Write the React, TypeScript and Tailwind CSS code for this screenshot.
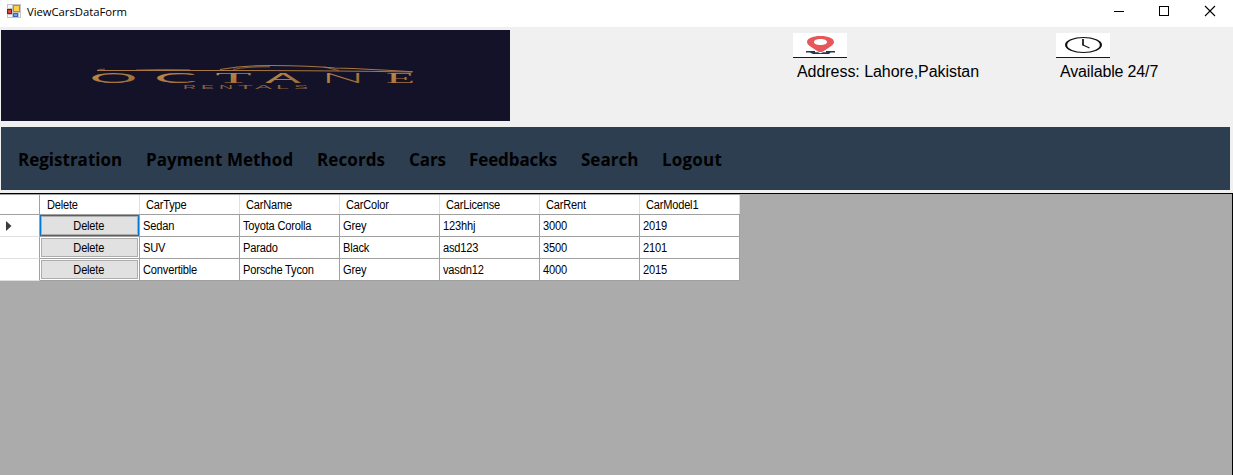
import React from "react";

const navItems = [
  { label: "Registration", style: "w-[128px]" },
  { label: "Payment Method", style: "w-[171px] tracking-[0.07px]" },
  { label: "Records", style: "w-[92px] tracking-[0.1px]" },
  { label: "Cars", style: "w-[60px] tracking-[-0.1px]" },
  { label: "Feedbacks", style: "w-[112px] tracking-[-0.1px]" },
  { label: "Search", style: "w-[81px]" },
  { label: "Logout", style: "w-[80px] tracking-[0.2px]" },
];

const columns = ["Delete", "CarType", "CarName", "CarColor", "CarLicense", "CarRent", "CarModel1"];

const rows = [
  ["Sedan", "Toyota Corolla", "Grey", "123hhj", "3000", "2019"],
  ["SUV", "Parado", "Black", "asd123", "3500", "2101"],
  ["Convertible", "Porsche Tycon", "Grey", "vasdn12", "4000", "2015"],
];

function FormIcon() {
  return (
    <svg width="14" height="14" viewBox="0 0 14 14" className="block" shapeRendering="crispEdges">
      <rect width="14" height="14" fill="#c4c4c4" />
      <path d="M1 1h4v3H1zM1 11h4v2H1zM12 9h1v4h-1z" fill="#f4f4f4" />
      <rect x="0" y="5" width="5" height="5" fill="#8c1414" />
      <rect x="1" y="6" width="3" height="3" fill="#d84343" />
      <rect x="6" y="1" width="7" height="7" fill="#c98a0c" />
      <rect x="7" y="2" width="5" height="5" fill="#fbd04c" />
      <rect x="6" y="9" width="5" height="4" fill="#2f66cc" />
      <rect x="7" y="10" width="3" height="2" fill="#6fa0f2" />
    </svg>
  );
}

function TitleBar() {
  return (
    <header className="flex h-[27px] shrink-0 items-start bg-white">
      <div className="pl-[7px] pt-[4px]"><FormIcon /></div>
      <h1 className="ml-[6px] mt-[4px] whitespace-nowrap font-['Open_Sans',sans-serif] text-[11.3px] leading-[16px] tracking-[-0.04px] text-black">
        ViewCarsDataForm
      </h1>
      <svg className="ml-auto mr-[17px] mt-[5px]" width="102" height="12" viewBox="0 0 102 12" fill="none" stroke="#000">
        <path d="M0 6.5h10" shapeRendering="crispEdges" />
        <rect x="45.5" y="1.5" width="9" height="9" shapeRendering="crispEdges" />
        <path d="M91 1l10 10M101 1L91 11" strokeWidth="1.1" />
      </svg>
    </header>
  );
}

const logoLetters = [
  { char: "O", x: 89.5, width: 48, family: "Lato", weight: 400 },
  { char: "C", x: 154, width: 43, family: "Lato", weight: 400 },
  { char: "T", x: 215.5, width: 36, family: "Liberation Serif", weight: 400 },
  { char: "A", x: 265, width: 36, family: "Lato", weight: 400 },
  { char: "N", x: 321, width: 44, family: "Lato", weight: 300 },
  { char: "E", x: 386, width: 29, family: "Liberation Serif", weight: 400 },
];

const taglineLetters = [
  { char: "R", x: 183, width: 13 },
  { char: "E", x: 201, width: 13 },
  { char: "N", x: 219, width: 14 },
  { char: "T", x: 238, width: 15 },
  { char: "A", x: 255, width: 17 },
  { char: "L", x: 276, width: 13 },
  { char: "S", x: 294, width: 14 },
];

function Logo() {
  return (
    <svg className="ml-px block bg-[#141229]" width="509" height="91" viewBox="1 30 509 91">
      <defs>
        <linearGradient id="gold" x1="0" x2="1" y1="0" y2="1">
          <stop offset="0" stopColor="#c98e50" />
          <stop offset="1" stopColor="#94672f" />
        </linearGradient>
      </defs>
      <g fill="none" stroke="#a9773f">
        <path d="M97 70.5H226Q330 70.5 412 72" strokeWidth="1" />
        <path d="M97 70.5Q98 69 105 69.2M136 70Q160 69 190 69.8" strokeWidth=".7" />
        <path d="M220 69.5Q244 65.4 272 65.5Q310 65.5 335 68Q370 69 413 71.8" strokeWidth="1.1" />
        <path d="M233 69.5Q247 66.5 270 66.8M324 67L339 70.5" strokeWidth=".8" />
      </g>
      <g fill="url(#gold)" fontSize="24" transform="translate(0 82.7) scale(1 .57)">
        {logoLetters.map((l) => (
          <text key={l.char} x={l.x} y="0" fontFamily={l.family} fontWeight={l.weight} textLength={l.width} lengthAdjust="spacingAndGlyphs">
            {l.char}
          </text>
        ))}
      </g>
      <g fill="#8a633a" fontSize="11" fontFamily="'Liberation Sans', sans-serif" transform="translate(0 89) scale(1 .55)">
        {taglineLetters.map((l) => (
          <text key={l.char} x={l.x} y="0" textLength={l.width} lengthAdjust="spacingAndGlyphs">
            {l.char}
          </text>
        ))}
      </g>
    </svg>
  );
}

function PinIcon() {
  return (
    <svg className="block bg-white" width="54" height="25" viewBox="0 0 54 25">
      <path d="M13 18h9v1.4H13zM33 18h9v1.4h-9zM16.5 19.2h8.5l2.5 1 2.5-1h8l-2 1.8H20z" fill="#26384d" />
      <path fillRule="evenodd" d="M27.5 3C19.5 3 14 5.4 14 9c0 2 2 3.6 4.5 5.2L25 18.4q2.5 1.4 5 0l6.5-4.2C39 12.6 41 11 41 9 41 5.4 35.5 3 27.5 3zm0 3c3.8 0 6.5 1.200 6.500 3s-2.700 3-6.500 3S21 10.800 21 9s2.700-3 6.500-3z" fill="#e9565a" />
      <path d="M0 24.500h54" stroke="#16152a" />
    </svg>
  );
}

function ClockIcon() {
  return (
    <svg className="block bg-white" width="54" height="25" viewBox="0 0 54 25">
      <path fillRule="evenodd" d="M9 12a18.500 8 0 0 1 37 0a18.500 8 0 0 1-37 0zm2.200 0a16.300 6.900 0 0 0 32.600 0a16.300 6.900 0 0 0-32.600 0z" fill="#111" />
      <path d="M27 6v6.500" stroke="#111" strokeWidth="1.700" />
      <path d="M27 12l6.500 3" fill="none" stroke="#111" strokeWidth="1.100" />
      <path d="M0 24.500h54" stroke="#16152a" />
    </svg>
  );
}

function DataGrid() {
  return (
    <main className="mt-[3px] grow border-r border-t border-black bg-[#ababab] font-['Liberation_Sans',sans-serif] text-[12px] text-black">
      <div className="w-[740px]">
        <div className="grid h-[21px] grid-cols-[40px_repeat(7,100px)] border-b border-t border-[#a0a0a0] bg-white">
          <div className="border-r border-[#a0a0a0]" />
          {columns.map((name, i) => (
            <div key={name} className={`border-r border-[#e0e0e0] pt-px ${i === 0 ? "pl-[6.5px]" : "pl-[6px]"}`}>
              <span className="block origin-left scale-x-[0.92] whitespace-nowrap leading-[18px] tracking-[-0.2px]">{name}</span>
            </div>
          ))}
        </div>
        {rows.map((row, i) => (
          <div key={i} className="grid h-[22px] grid-cols-[40px_repeat(7,100px)] bg-white">
            <div className="flex items-center border-b border-r border-b-[#e0e0e0] border-r-[#a0a0a0] pl-[6px]">
              {i === 0 && (
                <svg width="6" height="10" viewBox="0 0 6 10"><path d="M0 0l5.500 5L0 10z" fill="#3c3c3c" /></svg>
              )}
            </div>
            <div className="border-b border-r border-[#a0a0a0]">
              <div className={i === 0 ? "h-[21px] bg-[#0078d7] p-px" : "h-[21px] bg-white p-px"}>
                <button className="block h-[19px] w-full border border-[#adadad] bg-[#e1e1e1] pr-[2px] pt-px text-center leading-[16px]">
                  <span className="inline-block scale-x-[0.92] tracking-[-0.2px]">Delete</span>
                </button>
              </div>
            </div>
            {row.map((value, j) => (
              <div key={j} className="border-b border-r border-[#a0a0a0] pl-[3px] pt-[2px]">
                <span className="block origin-left scale-x-[0.925] whitespace-nowrap leading-[19px] tracking-[-0.2px]">{value}</span>
              </div>
            ))}
          </div>
        ))}
      </div>
    </main>
  );
}

export default function App() {
  return (
    <div className="flex h-[475px] w-[1233px] flex-col overflow-hidden bg-[#f0f0f0]">
      <TitleBar />
      <section className="flex h-[100px] shrink-0 pt-[3px] font-['Liberation_Sans',sans-serif] text-[16px] leading-[18px] text-black">
        <Logo />
        <div className="ml-[283px] w-[263px] pt-[3px]">
          <PinIcon />
          <p className="ml-[4px] mt-[5px] whitespace-nowrap tracking-[-0.05px]">Address: Lahore,Pakistan</p>
        </div>
        <div className="pt-[3px]">
          <ClockIcon />
          <p className="ml-[4px] mt-[5px] whitespace-nowrap tracking-[-0.15px]">Available 24/7</p>
        </div>
      </section>
      <nav className="ml-px flex h-[63px] w-[1229px] shrink-0 items-center bg-[#2d3e50] pl-[17px] font-['Open_Sans',sans-serif] text-[17px] font-bold text-black">
        {navItems.map((item) => (
          <a key={item.label} className={`${item.style} shrink-0 whitespace-nowrap pt-[2px]`}>{item.label}</a>
        ))}
      </nav>
      <DataGrid />
    </div>
  );
}
